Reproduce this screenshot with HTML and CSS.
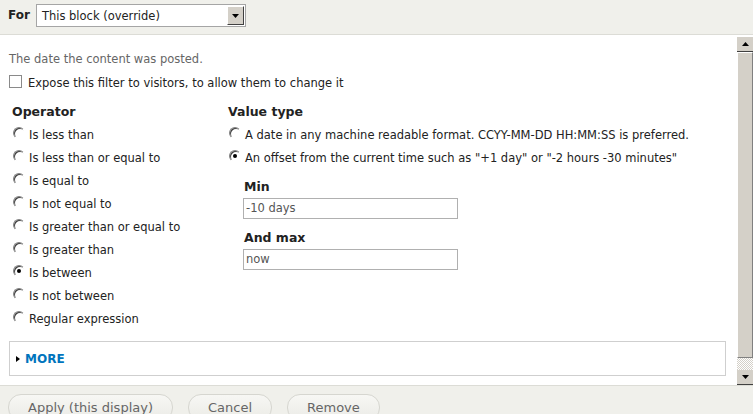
FILE: index.html
```html
<!DOCTYPE html>
<html lang="en">
<head>
    <meta charset="UTF-8">
    <title>Configure filter criterion</title>
    <link rel="stylesheet" href="styles.css">
</head>
<body>
    <div class="dialog">
        <div class="topbar">
            <span class="for-label">For</span>
            <div class="select">
                <span class="select-text">This block (override)</span>
                <span class="select-arrow">
                    <svg width="7" height="4" viewBox="0 0 7 4"><path d="M0 0h7L3.5 4z" fill="#000"/></svg>
                </span>
            </div>
        </div>

        <div class="middle">
            <div class="content">
                <div class="description">The date the content was posted.</div>
                <div class="check-row">
                    <span class="checkbox"></span>
                    <span>Expose this filter to visitors, to allow them to change it</span>
                </div>

                <div class="columns">
                    <div class="col-operator">
                        <div class="heading">Operator</div>
                        <div class="radio-row"><span class="radio"></span>Is less than</div>
                        <div class="radio-row"><span class="radio"></span>Is less than or equal to</div>
                        <div class="radio-row"><span class="radio"></span>Is equal to</div>
                        <div class="radio-row"><span class="radio"></span>Is not equal to</div>
                        <div class="radio-row"><span class="radio"></span>Is greater than or equal to</div>
                        <div class="radio-row"><span class="radio"></span>Is greater than</div>
                        <div class="radio-row"><span class="radio checked"></span>Is between</div>
                        <div class="radio-row"><span class="radio"></span>Is not between</div>
                        <div class="radio-row"><span class="radio"></span>Regular expression</div>
                    </div>
                    <div class="col-value">
                        <div class="heading">Value type</div>
                        <div class="radio-row"><span class="radio"></span>A date in any machine readable format. CCYY-MM-DD HH:MM:SS is preferred.</div>
                        <div class="radio-row"><span class="radio checked"></span>An offset from the current time such as "+1 day" or "-2 hours -30 minutes"</div>
                        <div class="field field-min">
                            <div class="field-label">Min</div>
                            <div class="text-input">-10 days</div>
                        </div>
                        <div class="field field-max">
                            <div class="field-label">And max</div>
                            <div class="text-input">now</div>
                        </div>
                    </div>
                </div>

                <div class="more">
                    <span class="more-arrow"></span>
                    <span class="more-link">MORE</span>
                </div>
            </div>

            <div class="scrollbar">
                <div class="scroll-btn">
                    <svg width="7" height="4" viewBox="0 0 7 4"><path d="M0 4h7L3.5 0z" fill="#000"/></svg>
                </div>
                <div class="scroll-thumb"></div>
                <div class="scroll-track"></div>
                <div class="scroll-btn">
                    <svg width="7" height="4" viewBox="0 0 7 4"><path d="M0 0h7L3.5 4z" fill="#000"/></svg>
                </div>
            </div>
        </div>

        <div class="buttons">
            <span class="button">Apply (this display)</span>
            <span class="button">Cancel</span>
            <span class="button">Remove</span>
        </div>
    </div>
</body>
</html>
```

FILE: styles.css
```css
body {
    margin: 0;
    font-family: "DejaVu Sans", Verdana, sans-serif;
    font-size: 11.5px;
    color: #333;
    background-color: #fff;
    overflow: hidden;
}
.dialog {
    width: 753px;
    height: 414px;
    overflow: hidden;
}
.topbar {
    height: 35px;
    background-color: #f0f0eb;
    border-bottom: 1px solid #dcdcd6;
    box-sizing: border-box;
    display: flex;
    align-items: flex-start;
    padding: 4px 0 0 8px;
}
.for-label {
    font-weight: bold;
    font-size: 12px;
    line-height: 23px;
    margin-right: 6px;
    color: #222;
}
.select {
    width: 210px;
    height: 23px;
    box-sizing: border-box;
    border: 1px solid #a5a5a5;
    background-color: #fff;
    display: flex;
    align-items: center;
    justify-content: space-between;
    padding: 0 1px 0 5px;
}
.select-text {
    font-size: 11.5px;
    color: #222;
}
.select-arrow {
    width: 17px;
    height: 19px;
    box-sizing: border-box;
    background-color: #d4d0c8;
    border: 1px solid;
    border-color: #fff #404040 #404040 #fff;
    display: flex;
    align-items: center;
    justify-content: center;
}
.middle {
    display: flex;
    height: 351px;
    border-bottom: 1px solid #dcdcd6;
    box-sizing: border-box;
}
.content {
    flex: 1;
    padding: 0 11px 0 9px;
}
.description {
    margin-top: 16px;
    line-height: 16px;
    color: #666;
}
.check-row {
    display: flex;
    align-items: center;
    margin-top: 8px;
    line-height: 16px;
    color: #222;
}
.checkbox {
    width: 11px;
    height: 11px;
    border: 1px solid #8a8a8a;
    background-color: #fff;
    margin: -4px 6px 0 0;
}
.columns {
    display: flex;
    margin-top: 13px;
    padding-left: 3px;
}
.col-operator {
    width: 216px;
}
.col-value {
    flex: 1;
}
.heading {
    font-weight: bold;
    font-size: 12.5px;
    line-height: 16px;
    margin-bottom: 4px;
    color: #222;
}
.radio-row {
    display: flex;
    align-items: flex-start;
    line-height: 23px;
    height: 23px;
    white-space: nowrap;
    color: #222;
}
.radio {
    width: 12px;
    height: 12px;
    box-sizing: border-box;
    border-radius: 50%;
    border: 1px solid;
    border-color: #808080 #fff #fff #808080;
    box-shadow: inset 1px 1px 0 #404040;
    background-color: #fff;
    margin: 3px 4px 0 1px;
    flex-shrink: 0;
    display: flex;
    align-items: center;
    justify-content: center;
}
.radio.checked::after {
    content: "";
    width: 4px;
    height: 4px;
    border-radius: 50%;
    background-color: #000;
}
.field {
    padding-left: 16px;
}
.field-min {
    margin-top: 9px;
}
.field-max {
    margin-top: 11px;
}
.field-label {
    font-weight: bold;
    font-size: 12.5px;
    line-height: 16px;
    margin-bottom: 3px;
    color: #222;
}
.text-input {
    width: 215px;
    height: 21px;
    box-sizing: border-box;
    border: 1px solid #b0b0b0;
    padding-left: 2px;
    line-height: 19px;
    font-size: 11.5px;
    color: #555;
    margin-left: -1px;
}
.more {
    margin-top: 10px;
    height: 35px;
    box-sizing: border-box;
    border: 1px solid #cfcfcf;
    display: flex;
    align-items: center;
    padding-left: 6px;
}
.more-arrow {
    width: 0;
    height: 0;
    border-top: 3px solid transparent;
    border-bottom: 3px solid transparent;
    border-left: 4px solid #000;
    margin-right: 5px;
}
.more-link {
    color: #0074bd;
    font-weight: bold;
    font-size: 12px;
}
.scrollbar {
    width: 16px;
    display: flex;
    flex-direction: column;
    padding-top: 2px;
    box-sizing: border-box;
}
.scroll-btn {
    height: 14px;
    background-color: #d4d0c8;
    border-bottom: 1px solid #404040;
    display: flex;
    align-items: center;
    justify-content: center;
}
.scroll-thumb {
    height: 306px;
    background-color: #d4d0c8;
    border: 1px solid;
    border-color: #fff #808080 #808080 #fff;
    box-sizing: border-box;
}
.scroll-track {
    flex: 1;
    background-color: #ece9e2;
    background-image: repeating-conic-gradient(#d4d0c8 0 25%, #fff 0 50%);
    background-size: 2px 2px;
}
.buttons {
    height: 28px;
    background-color: #f0f0eb;
    display: flex;
    align-items: flex-start;
    gap: 15px;
    padding: 8px 0 0 8px;
}
.button {
    display: inline-block;
    height: 25px;
    line-height: 25px;
    padding: 0 19px;
    border: 1px solid #d6d6d0;
    border-radius: 13px;
    background: linear-gradient(#f7f7f4, #ebebe6);
    color: #666;
    font-size: 13px;
}
```
